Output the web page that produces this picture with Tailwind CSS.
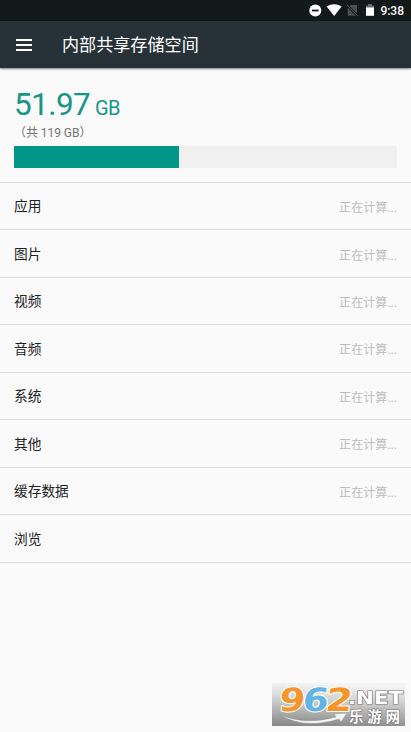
<!DOCTYPE html>
<html lang="zh-CN">
<head>
<meta charset="utf-8">
<meta name="viewport" content="width=device-width, initial-scale=1">
<title>内部共享存储空间</title>
<script src="https://cdn.jsdelivr.net/npm/@tailwindcss/browser@4"></script>
</head>
<body class="relative h-[732px] w-[411px] overflow-hidden bg-[#fafafa] font-[Roboto,'Noto_Sans_CJK_SC',sans-serif] text-[#212121]">
<div class="flex h-[21px] items-center justify-end bg-[#13181b] pr-[7px]">
  <svg class="h-[21px] w-[70px]" viewBox="308 0 70 21">
    <circle cx="315.3" cy="10.5" r="6" fill="#fff"/><path d="M312 9.6h6.6v1.8H312z" fill="#13181b"/>
    <path d="M326.6 6.4Q334.2 2.2 341.6 6.4L334.2 16z" fill="#fff"/>
    <path d="M350.5 5H357v8.3l-7.4-7.4zM347.7 7.6l8 8.1h-8z" fill="#4b4f51"/><path d="M347.2 5L357.6 15.8" stroke="#686b6d" fill="none" stroke-width=".8"/>
    <path d="M368 4h4v1.5h2V8h-8V5.5h2z" fill="#666a6c"/><path d="M366 7.5h8v8.3h-8z" fill="#fff"/>
  </svg>
  <time class="w-[26px] pt-px text-right text-[12px] leading-[20px] font-medium whitespace-nowrap text-white">9:38</time>
</div>
<header class="relative flex h-[47px] items-center bg-[#263238] pl-[16px] shadow-[0_1px_2px_rgba(0,0,0,0.5)]">
  <svg class="h-[12px] w-[16px]" viewBox="0 0 16 12"><path d="M0 1h16M0 6h16M0 11h16" stroke="#fff" stroke-width="1.8"/></svg>
  <h1 class="ml-[30px] pt-[2px] text-[17.1px] leading-[45px] whitespace-nowrap text-white">内部共享存储空间</h1>
</header>
<main>
  <section class="h-[114px] px-[14px] pt-[19px]">
    <p class="flex h-[36px] items-baseline leading-[36px] text-[#159687]"><span class="w-[76px] text-[31.5px] tracking-[-0.6px]">51.97</span><span class="ml-[5px] text-[20px] tracking-[-0.5px]">GB</span></p>
    <p class="h-[20px] pt-px text-[12px] leading-[19px] tracking-[-0.05px] text-[#757575]">（共 119 GB）</p>
    <div class="mt-[3px] h-[22px] bg-[#f0f0f0]"><div class="h-full w-[165px] bg-[#009688]"></div></div>
  </section>
  <ul class="border-b border-[#d9d9d9] text-[13.7px]">
    <li class="flex h-[47.45px] items-center justify-between border-t border-[#d9d9d9] px-[14px] pt-px"><span>应用</span><span class="pt-[3px] text-[12.1px] text-[#bdbdbd]">正在计算...</span></li>
    <li class="flex h-[47.45px] items-center justify-between border-t border-[#d9d9d9] px-[14px] pt-px"><span>图片</span><span class="pt-[3px] text-[12.1px] text-[#bdbdbd]">正在计算...</span></li>
    <li class="flex h-[47.45px] items-center justify-between border-t border-[#d9d9d9] px-[14px] pt-px"><span>视频</span><span class="pt-[3px] text-[12.1px] text-[#bdbdbd]">正在计算...</span></li>
    <li class="flex h-[47.45px] items-center justify-between border-t border-[#d9d9d9] px-[14px] pt-px"><span>音频</span><span class="pt-[3px] text-[12.1px] text-[#bdbdbd]">正在计算...</span></li>
    <li class="flex h-[47.45px] items-center justify-between border-t border-[#d9d9d9] px-[14px] pt-px"><span>系统</span><span class="pt-[3px] text-[12.1px] text-[#bdbdbd]">正在计算...</span></li>
    <li class="flex h-[47.45px] items-center justify-between border-t border-[#d9d9d9] px-[14px] pt-px"><span>其他</span><span class="pt-[3px] text-[12.1px] text-[#bdbdbd]">正在计算...</span></li>
    <li class="flex h-[47.45px] items-center justify-between border-t border-[#d9d9d9] px-[14px] pt-px"><span>缓存数据</span><span class="pt-[3px] text-[12.1px] text-[#bdbdbd]">正在计算...</span></li>
    <li class="flex h-[47.45px] items-center border-t border-[#d9d9d9] px-[14px] pt-px"><span>浏览</span></li>
  </ul>
</main>
<svg class="absolute top-[683px] left-[272px] h-[43px] w-[133px] overflow-visible" viewBox="0 0 133 43">
  <defs>
    <linearGradient id="bg" x1="0.1" y1="0" x2="0" y2="1"><stop offset="0" stop-color="#f4f4f4"/><stop offset=".45" stop-color="#c8c8c8"/><stop offset="1" stop-color="#858585"/></linearGradient>
  </defs>
  <rect width="133" height="43" fill="url(#bg)"/>
  <path d="M7 31Q31 43 64 34L62 31L75 30L69 39L67 36Q31 47 7 31z" fill="#f5f5f5" stroke="#888" stroke-width=".4"/>
  <g transform="translate(7 27.5) skewX(-7)" font-family="DejaVu Sans, sans-serif" font-weight="bold" font-size="32" stroke="#fff" stroke-width="2" paint-order="stroke" stroke-linejoin="round">
    <text x="-1" y="0" textLength="26" lengthAdjust="spacingAndGlyphs" fill="#f7952d">9</text>
    <text x="22.5" y="0" textLength="26" lengthAdjust="spacingAndGlyphs" fill="#62b4e4">6</text>
    <text x="45.5" y="0" textLength="27" lengthAdjust="spacingAndGlyphs" fill="#f7952d">2</text>
  </g>
  <g fill="#fff" stroke="#777" stroke-width="1.2" paint-order="stroke" font-weight="bold">
    <text x="76" y="20.5" font-family="DejaVu Sans, sans-serif" font-size="17" textLength="55" lengthAdjust="spacingAndGlyphs">.NET</text>
    <text x="77" y="38.5" font-family="Noto Sans CJK SC, sans-serif" font-size="14.5" textLength="51">乐游网</text>
  </g>
</svg>
</body>
</html>
